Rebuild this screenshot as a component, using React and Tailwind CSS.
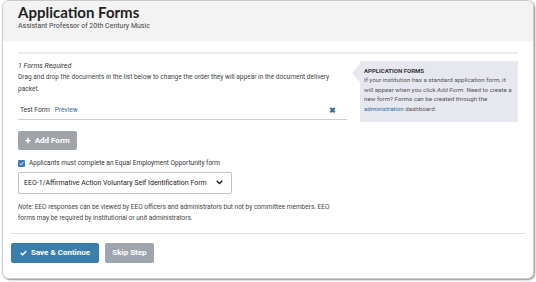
import React from "react";

function App() {
  return (
    <div className="w-[536px] h-[282px] bg-white" style={{ fontFamily: "Roboto, 'Liberation Sans', sans-serif" }}>
      <div className="ml-[2px] w-[532px] h-[279px] border border-[#c9c9c9] rounded-[7px] shadow-[1px_1px_2px_rgba(0,0,0,0.45)] overflow-hidden flex flex-col">
        <div className="h-[40px] bg-[#f3f3f3] px-[15px] pt-[2px]">
          <h1 className="text-[15px] leading-[19px] font-bold text-[#222]" style={{ fontFamily: "Lato, 'Open Sans', sans-serif" }}>
            Application Forms
          </h1>
          <p className="text-[7px] leading-[9px] text-[#444]">Assistant Professor of 20th Century Music</p>
        </div>

        <div className="px-[15px] pt-[11px]">
          <div className="h-[2px] bg-[#ececec]" />
          <div className="flex mt-[7px]">
            <div className="w-[329px]">
              <p className="text-[7px] leading-[11px] italic text-[#333]">1 Forms Required</p>
              <p className="text-[6.55px] leading-[11.5px] text-[#444]">
                Drag and drop the documents in the list below to change the order they will appear in the document delivery packet.
              </p>
              <div className="mt-[10px] flex items-center h-[11px] pl-[2px] pr-[11px] text-[6.6px]">
                <span className="text-[#333]">Test Form</span>
                <span className="ml-[5px] text-[#2f6fa7]">Preview</span>
                <span className="ml-auto text-[#2f6fa7] font-bold text-[8px]">✖</span>
              </div>
              <div className="mt-[3px] h-[1px] bg-[#cfcfcf]" />

              <button className="mt-[11px] w-[59px] h-[19px] rounded-[2px] bg-[#a0a4a9] text-white text-[8px] font-bold flex items-center justify-center gap-[4px]">
                <span className="text-[10px] leading-none">+</span>
                <span>Add Form</span>
              </button>

              <div className="mt-[9px] flex items-center gap-[4px]">
                <span className="w-[7px] h-[7px] rounded-[1px] bg-[#3b7db4] flex items-center justify-center">
                  <svg width="5" height="5" viewBox="0 0 10 10">
                    <path d="M1.5 5.2 L4 7.6 L8.6 2.4" stroke="white" strokeWidth="1.8" fill="none" />
                  </svg>
                </span>
                <span className="text-[6.5px] text-[#333]">Applicants must complete an Equal Employment Opportunity form</span>
              </div>

              <div className="mt-[3px] w-[214px] h-[22px] border border-[#c4c4c4] rounded-[2px] flex items-center pl-[5px] pr-[8px]">
                <span className="text-[7px] text-[#222]">EEO-1/Affirmative Action Voluntary Self Identification Form</span>
                <svg className="ml-auto" width="7" height="5" viewBox="0 0 10 7">
                  <path d="M1 1 L5 5 L9 1" stroke="#222" strokeWidth="2" fill="none" />
                </svg>
              </div>

              <p className="mt-[8px] text-[6.5px] leading-[11px] text-[#444]">
                <em>Note:</em> EEO responses can be viewed by EEO officers and administrators but not by committee members. EEO forms may be required by institutional or unit administrators.
              </p>
            </div>

            <div className="ml-[13px] relative">
              <div className="absolute left-[-8px] top-[3px] w-0 h-0 border-y-[9px] border-y-transparent border-r-[8px] border-r-[#e7e7ef]" />
              <div className="w-[158px] bg-[#e7e7ef] pl-[4px] pr-[6px] pt-[5px] pb-[8px]">
                <p className="text-[6px] leading-[10px] font-bold text-[#333]">APPLICATION FORMS</p>
                <p className="text-[6.2px] leading-[9.5px] text-[#555]">
                  If your institution has a standard application form, it will appear when you click <em>Add Form</em>. Need to create a new form? Forms can be created through the{" "}
                  <span className="text-[#2f6fa7]">administration</span> dashboard.
                </p>
              </div>
            </div>
          </div>
        </div>

        <div className="mx-[8px] mt-[9px] border-t border-[#dedede] pt-[9px] flex gap-[6px]">
          <button className="w-[88px] h-[20px] rounded-[2px] bg-[#3a7eab] text-white text-[8px] font-bold flex items-center justify-center gap-[4px]">
            <svg width="7" height="6" viewBox="0 0 10 8">
              <path d="M1 4 L3.8 6.6 L9 1.2" stroke="white" strokeWidth="2" fill="none" />
            </svg>
            <span>Save &amp; Continue</span>
          </button>
          <button className="w-[49px] h-[20px] rounded-[2px] bg-[#9ea5ae] text-white text-[8px] font-bold">Skip Step</button>
        </div>
      </div>
    </div>
  );
}

export default App;
